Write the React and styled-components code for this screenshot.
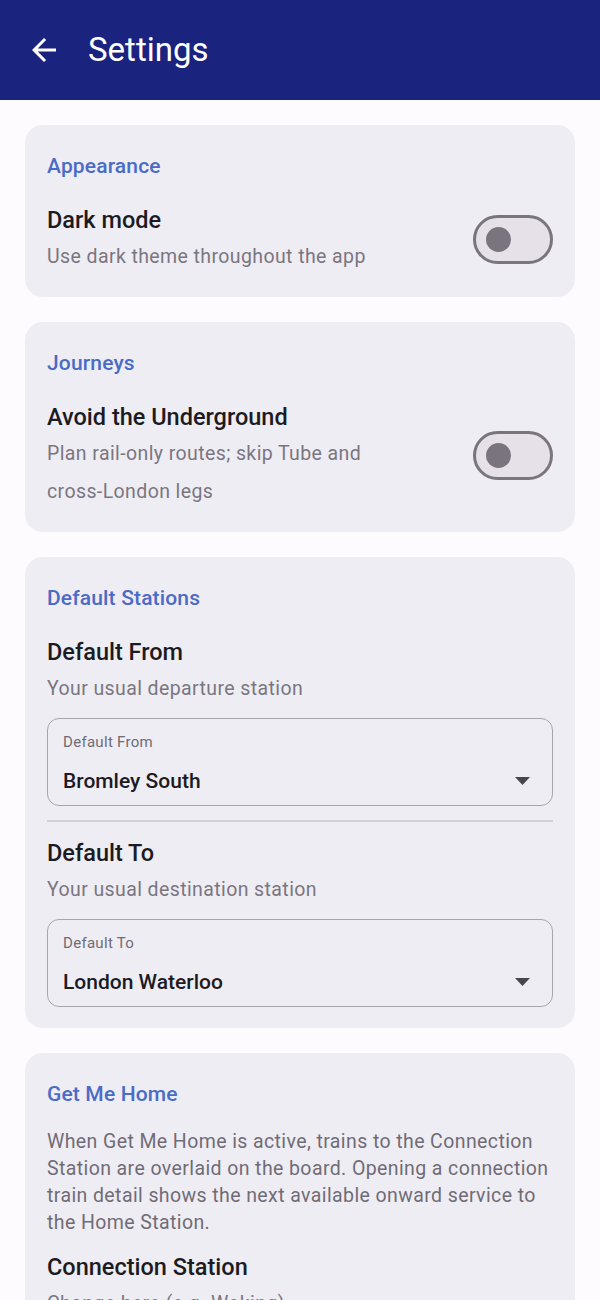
import styled, { createGlobalStyle } from 'styled-components';
import { useState } from 'react';

const GlobalStyle = createGlobalStyle`
  html, body {
    margin: 0;
    padding: 0;
    background: #fdfbfe;
    font-family: Roboto, "Noto Sans", "Liberation Sans", sans-serif;
  }
  * { box-sizing: border-box; }
`;

const Page = styled.div`
  min-height: 100vh;
  background: #fdfbfe;
`;

const TopBar = styled.header`
  height: 100px;
  background: #1a237e;
  display: flex;
  align-items: center;
  padding-left: 26px;
  gap: 26px;
  color: #ffffff;
`;

const BackButton = styled.button`
  width: 36px;
  height: 36px;
  padding: 0;
  border: none;
  background: transparent;
  display: flex;
  align-items: center;
  justify-content: center;
  color: inherit;
`;

const Title = styled.h1`
  margin: 0;
  font-size: 33px;
  font-weight: 400;
  line-height: 40px;
`;

const Content = styled.main`
  display: flex;
  flex-direction: column;
  gap: 25px;
  padding: 25px 25px 40px;
`;

const Card = styled.section`
  background: #efedf4;
  border-radius: 18px;
  padding: 25px 22px 21px;
  display: flex;
  flex-direction: column;
`;

const SectionTitle = styled.h2`
  margin: 0;
  font-size: 21px;
  font-weight: 500;
  line-height: 32px;
  letter-spacing: 0.15px;
  color: #4a6bc6;
`;

const Row = styled.div`
  display: flex;
  align-items: center;
  gap: 24px;
  margin-top: ${(p) => p.$top ?? 23}px;
`;

const RowText = styled.div`
  flex: 1;
  min-width: 0;
`;

const ItemTitle = styled.div`
  font-size: 23.5px;
  font-weight: 500;
  line-height: 30px;
  color: #1c1b1f;
`;

const ItemSub = styled.div`
  margin-top: 3px;
  font-size: 19.5px;
  line-height: 38px;
  letter-spacing: 0.4px;
  color: #7a7680;
`;

const NoWrap = styled.span`
  white-space: nowrap;
`;

const Description = styled.p`
  margin: 18px 0 0;
  font-size: 19.5px;
  line-height: 27px;
  letter-spacing: 0.4px;
  color: #706c76;
`;

const Track = styled.button`
  flex: none;
  width: 80px;
  height: 49px;
  margin-top: -2px;
  border-radius: 25px;
  border: 3px solid #79747e;
  background: #e6e0e9;
  padding: 0 0 0 ${(p) => (p.$on ? 40 : 10)}px;
  display: flex;
  align-items: center;
  cursor: pointer;
`;

const Thumb = styled.span`
  width: 25px;
  height: 25px;
  border-radius: 50%;
  background: #79747e;
`;

const Dropdown = styled.div`
  margin-top: 10px;
  height: 88px;
  border: 1.5px solid #a8a4ad;
  border-radius: 12px;
  padding: 13px 22px 0 15px;
  display: flex;
  flex-direction: column;
`;

const FieldLabel = styled.div`
  font-size: 15px;
  line-height: 20px;
  letter-spacing: 0.3px;
  color: #6f6b75;
`;

const FieldValue = styled.div`
  margin-top: 14px;
  display: flex;
  align-items: center;
  justify-content: space-between;
  font-size: 21px;
  font-weight: 500;
  line-height: 30px;
  color: #1c1b1f;
`;

const Divider = styled.hr`
  margin: 14px 0 0;
  border: none;
  border-top: 2px solid #d2cfd8;
`;

const ArrowBack = () => (
  <svg width="36" height="36" viewBox="0 0 24 24" fill="currentColor">
    <path d="M20 11H7.83l5.59-5.59L12 4l-8 8 8 8 1.41-1.41L7.83 13H20v-2z" />
  </svg>
);

const DropArrow = () => (
  <svg width="15" height="8" viewBox="0 0 15 8" fill="#49454f">
    <path d="M0 0h15L7.5 8z" />
  </svg>
);

function Switch({ on, onToggle }) {
  return (
    <Track $on={on} onClick={onToggle} aria-pressed={on}>
      <Thumb />
    </Track>
  );
}

function StationField({ label, value }) {
  return (
    <Dropdown>
      <FieldLabel>{label}</FieldLabel>
      <FieldValue>
        {value}
        <DropArrow />
      </FieldValue>
    </Dropdown>
  );
}

export default function App() {
  const [darkMode, setDarkMode] = useState(false);
  const [avoidTube, setAvoidTube] = useState(false);

  return (
    <Page>
      <GlobalStyle />
      <TopBar>
        <BackButton aria-label="Back">
          <ArrowBack />
        </BackButton>
        <Title>Settings</Title>
      </TopBar>
      <Content>
        <Card>
          <SectionTitle>Appearance</SectionTitle>
          <Row>
            <RowText>
              <ItemTitle>Dark mode</ItemTitle>
              <ItemSub>Use dark theme throughout the app</ItemSub>
            </RowText>
            <Switch on={darkMode} onToggle={() => setDarkMode(!darkMode)} />
          </Row>
        </Card>

        <Card>
          <SectionTitle>Journeys</SectionTitle>
          <Row>
            <RowText>
              <ItemTitle>Avoid the Underground</ItemTitle>
              <ItemSub>
                Plan rail-only routes; skip Tube and <NoWrap>cross-London</NoWrap> legs
              </ItemSub>
            </RowText>
            <Switch on={avoidTube} onToggle={() => setAvoidTube(!avoidTube)} />
          </Row>
        </Card>

        <Card>
          <SectionTitle>Default Stations</SectionTitle>
          <Row>
            <RowText>
              <ItemTitle>Default From</ItemTitle>
              <ItemSub>Your usual departure station</ItemSub>
            </RowText>
          </Row>
          <StationField label="Default From" value="Bromley South" />
          <Divider />
          <Row $top={16}>
            <RowText>
              <ItemTitle>Default To</ItemTitle>
              <ItemSub>Your usual destination station</ItemSub>
            </RowText>
          </Row>
          <StationField label="Default To" value="London Waterloo" />
        </Card>

        <Card>
          <SectionTitle>Get Me Home</SectionTitle>
          <Description>
            When Get Me Home is active, trains to the Connection Station are
            overlaid on the board. Opening a connection train detail shows the
            next available onward service to the Home Station.
          </Description>
          <Row $top={16}>
            <RowText>
              <ItemTitle>Connection Station</ItemTitle>
              <ItemSub>Change here (e.g. Woking)</ItemSub>
            </RowText>
          </Row>
        </Card>
      </Content>
    </Page>
  );
}
